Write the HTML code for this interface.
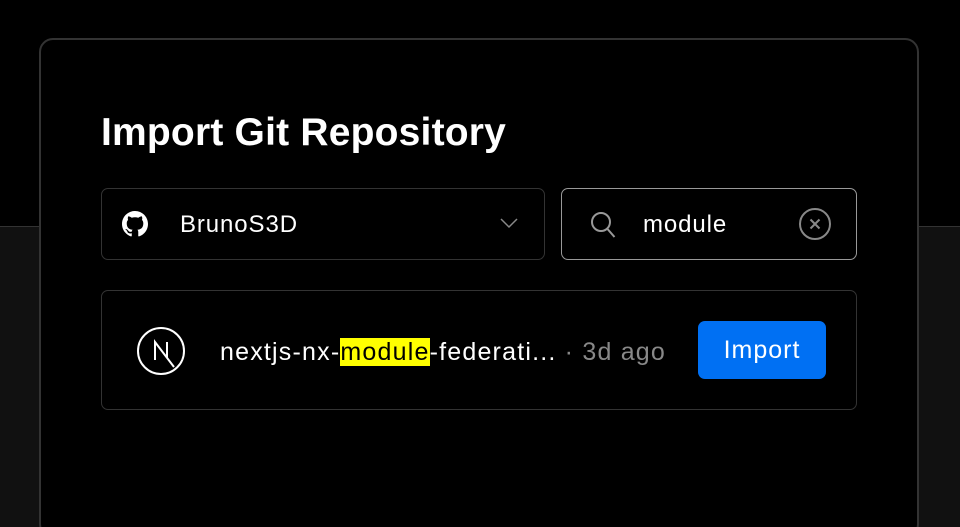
<!DOCTYPE html>
<html style="overflow:hidden"><head><style>
*{margin:0;padding:0;box-sizing:border-box}
html,body{width:960px;height:527px;overflow:hidden}
body{background:#111;position:relative;font-family:"Liberation Sans",sans-serif;color:#ededed}
.top{position:absolute;left:0;top:0;width:960px;height:227px;background:#000;border-bottom:1px solid #333}
.panel{position:absolute;left:39px;top:38px;width:880px;height:500px;background:#000;border:2px solid #333;border-radius:14px}
h1{position:absolute;left:101px;top:111px;font-size:39px;font-weight:700;letter-spacing:0.2px;color:#fff}
.box{position:absolute;border:1.5px solid #333;border-radius:7px}
.t{position:absolute;font-size:24px;color:#fff;letter-spacing:0.9px}
</style></head><body>
<div class="top"></div>
<div class="panel"></div>
<h1>Import Git Repository</h1>
<div class="box" style="left:101px;top:188px;width:444px;height:72px"></div>
<svg style="position:absolute;left:122px;top:211px" width="26" height="26" viewBox="0 0 16 16"><path fill="#fff" d="M8 0C3.580 0 0 3.58 0 8c0 3.54 2.29 6.53 5.47 7.59.4.07.55-.17.55-.38 0-.19-.01-.82-.01-1.49-2.01.37-2.530-.49-2.69-.94-.09-.23-.48-.94-.82-1.130-.28-.15-.68-.52-.01-.53.63-.01 1.08.58 1.23.82.72 1.21 1.87.87 2.33.66.07-.52.28-.87.51-1.07-1.78-.2-3.64-.89-3.64-3.95 0-.87.31-1.59.82-2.15-.08-.2-.36-1.02.08-2.12 0 0 .67-.21 2.2.82.64-.18 1.32-.27 2-.27.68 0 1.36.09 2 .27 1.53-1.04 2.2-.82 2.2-.82.44 1.1.16 1.92.08 2.12.51.56.82 1.27.82 2.15 0 3.07-1.87 3.75-3.65 3.95.29.25.54.73.54 1.480 0 1.07-.01 1.93-.01 2.2 0 .21.15.46.55.38A8.013 8.013 0 0016 8c0-4.42-3.58-8-8-8z"/></svg>
<div class="t" style="left:180px;top:211px">BrunoS3D</div>
<svg style="position:absolute;left:499px;top:216px" width="20" height="14"><path d="M2 3l8 8 8-8" stroke="#888" stroke-width="1.5" fill="none"/></svg>
<div class="box" style="left:561px;top:188px;width:296px;height:72px;border-color:#999"></div>
<svg style="position:absolute;left:588px;top:208px" width="30" height="32"><circle cx="13" cy="14" r="9" stroke="#999" stroke-width="2" fill="none"/><path d="M19.5 21l7 8" stroke="#999" stroke-width="2"/></svg>
<div class="t" style="left:643px;top:211px">module</div>
<svg style="position:absolute;left:797px;top:206px" width="36" height="36"><circle cx="18" cy="18" r="15" stroke="#888" stroke-width="2" fill="none"/><path d="M13.5 13.5l9 9M22.5 13.5l-9 9" stroke="#888" stroke-width="2"/></svg>
<div class="box" style="left:101px;top:290px;width:756px;height:120px"></div>
<svg style="position:absolute;left:136px;top:326px" width="50" height="50" viewBox="0 0 50 50"><circle cx="25" cy="25" r="23" stroke="#fff" stroke-width="2" fill="none"/><path d="M19 34V16l19 25M31 16v16" stroke="#fff" stroke-width="2" fill="none"/></svg>
<div class="t" style="left:220px;top:338px;font-size:25px;letter-spacing:1.2px;white-space:nowrap">nextjs-nx-<span style="background:#ff0;color:#000">module</span>-federati...<span style="color:#888"> &middot; 3d ago</span></div>
<div style="position:absolute;left:698px;top:321px;width:128px;height:58px;background:#0070f3;border-radius:7px;color:#fff;font-size:25px;letter-spacing:1px;text-align:center;line-height:58px">Import</div>
</body></html>
